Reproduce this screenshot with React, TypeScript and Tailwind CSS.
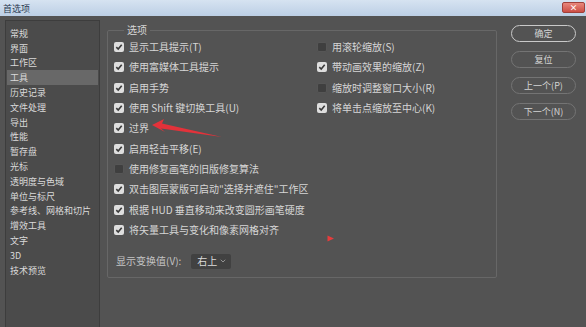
import { ChevronDown } from 'lucide-react';

const navItems = [
    '常规',
    '界面',
    '工作区',
    '工具',
    '历史记录',
    '文件处理',
    '导出',
    '性能',
    '暂存盘',
    '光标',
    '透明度与色域',
    '单位与标尺',
    '参考线、网格和切片',
    '增效工具',
    '文字',
    '3D',
    '技术预览',
];

const leftOptions: [string, boolean][] = [
    ['显示工具提示(T)', true],
    ['使用富媒体工具提示', true],
    ['启用手势', true],
    ['使用 Shift 键切换工具(U)', true],
    ['过界', true],
    ['启用轻击平移(E)', true],
    ['使用修复画笔的旧版修复算法', false],
    ['双击图层蒙版可启动"选择并遮住"工作区', true],
    ['根据 HUD 垂直移动来改变圆形画笔硬度', true],
    ['将矢量工具与变化和像素网格对齐', true],
];

const rightOptions: [string, boolean][] = [
    ['用滚轮缩放(S)', false],
    ['带动画效果的缩放(Z)', true],
    ['缩放时调整窗口大小(R)', false],
    ['将单击点缩放至中心(K)', true],
];

const buttons = ['确定', '复位', '上一个(P)', '下一个(N)'];

function CheckBox({ checked }: { checked: boolean }) {
    if (!checked) {
        return (
            <span className="w-[10px] h-[10px] rounded-[2px] bg-[#3f3f3f] border border-[#565656] shrink-0" />
        );
    }
    return (
        <span className="w-[10px] h-[10px] rounded-[2px] bg-[#dedede] flex items-center justify-center shrink-0">
            <svg width="8" height="8" viewBox="0 0 8 8">
                <path
                    d="M1.3 4.2 L3.2 6 L6.7 1.8"
                    fill="none"
                    stroke="#3a3a3a"
                    strokeWidth="1.6"
                />
            </svg>
        </span>
    );
}

function OptionRow({ label, checked }: { label: string; checked: boolean }) {
    return (
        <div className="h-[20.3px] flex items-center gap-[5px]">
            <CheckBox checked={checked} />
            <span className="text-[10px] leading-none text-[#d6d6d6] whitespace-nowrap">
                {label}
            </span>
        </div>
    );
}

export default function App() {
    return (
        <div
            className="relative w-[586px] h-[327px] bg-[#535353] flex flex-col overflow-hidden"
            style={{ fontFamily: '"Noto Sans CJK SC", "Noto Sans", sans-serif' }}
        >
            {/* title bar */}
            <div className="h-[16px] shrink-0 bg-gradient-to-b from-[#d6e3f1] to-[#bccfe5] flex items-center justify-between pl-[3px] pr-[1px]">
                <span className="text-[9px] leading-none text-[#2a3a50]">首选项</span>
                <div className="w-[23px] h-[11px] mt-[-1px] rounded-[2px] border border-[#a0403a] bg-gradient-to-b from-[#e8877c] to-[#cc4d45] flex items-center justify-center">
                    <span className="text-[8px] leading-none text-white font-bold">×</span>
                </div>
            </div>

            <div className="flex-1 flex pl-[5px]">
                {/* sidebar */}
                <div className="mt-[4px] w-[95px] bg-[#4b4b4b] border border-[#3d3d3d] border-b-0 pt-[5px] px-[1px] flex flex-col">
                    {navItems.map((item) => (
                        <div
                            key={item}
                            className={`h-[14.8px] flex items-center pl-[3px] text-[9px] leading-none text-[#dadada] whitespace-nowrap ${
                                item === '工具' ? 'bg-[#686868]' : ''
                            }`}
                        >
                            {item}
                        </div>
                    ))}
                </div>

                {/* options group */}
                <fieldset className="mt-[7px] ml-[7px] w-[390px] h-[255px] border border-[#676767] rounded-[2px] pl-[6px] pb-[9px] flex flex-col self-start">
                    <legend className="ml-[10px] px-[3px] text-[10px] leading-[14px] text-[#d6d6d6]">
                        选项
                    </legend>
                    <div className="flex">
                        <div className="w-[203px] flex flex-col">
                            {leftOptions.map(([label, checked]) => (
                                <OptionRow key={label} label={label} checked={checked} />
                            ))}
                        </div>
                        <div className="flex flex-col">
                            {rightOptions.map(([label, checked]) => (
                                <OptionRow key={label} label={label} checked={checked} />
                            ))}
                        </div>
                    </div>
                    <div className="mt-[14px] flex items-center gap-[10px] pl-[2px]">
                        <span className="text-[10px] leading-none text-[#c4c4c4]">显示变换值(V):</span>
                        <div className="w-[40px] h-[15px] bg-[#414141] rounded-[2px] flex items-center justify-between pl-[6px] pr-[4px]">
                            <span className="text-[10px] leading-none text-[#dcdcdc]">右上</span>
                            <ChevronDown size={8} color="#bdbdbd" strokeWidth={2} />
                        </div>
                    </div>
                </fieldset>

                {/* buttons */}
                <div className="ml-[14px] mt-[9px] w-[65px] flex flex-col gap-[9px]">
                    {buttons.map((b, i) => (
                        <div
                            key={b}
                            className={`h-[17px] rounded-full flex items-center justify-center text-[9px] leading-none text-[#d4d4d4] ${
                                i === 0
                                    ? 'border-[1.5px] border-[#c9c9c9]'
                                    : 'border border-[#747474]'
                            }`}
                        >
                            {b}
                        </div>
                    ))}
                </div>
            </div>

            {/* red annotation arrow */}
            <svg
                className="absolute left-[148px] top-[116px]"
                width="80"
                height="26"
                viewBox="0 0 80 26"
                style={{ filter: 'blur(0.4px)' }}
            >
                <polygon
                    points="4,9 16,3 14,7.5 74,21 13,12.5 17,16"
                    fill="#e3323a"
                />
            </svg>
            <svg
                className="absolute left-[326px] top-[234px]"
                width="9"
                height="9"
                viewBox="0 0 9 9"
                style={{ filter: 'blur(0.6px)' }}
            >
                <polygon points="1.5,1.5 8,4.5 1.5,7.5" fill="#e63c3c" />
            </svg>
        </div>
    );
}
